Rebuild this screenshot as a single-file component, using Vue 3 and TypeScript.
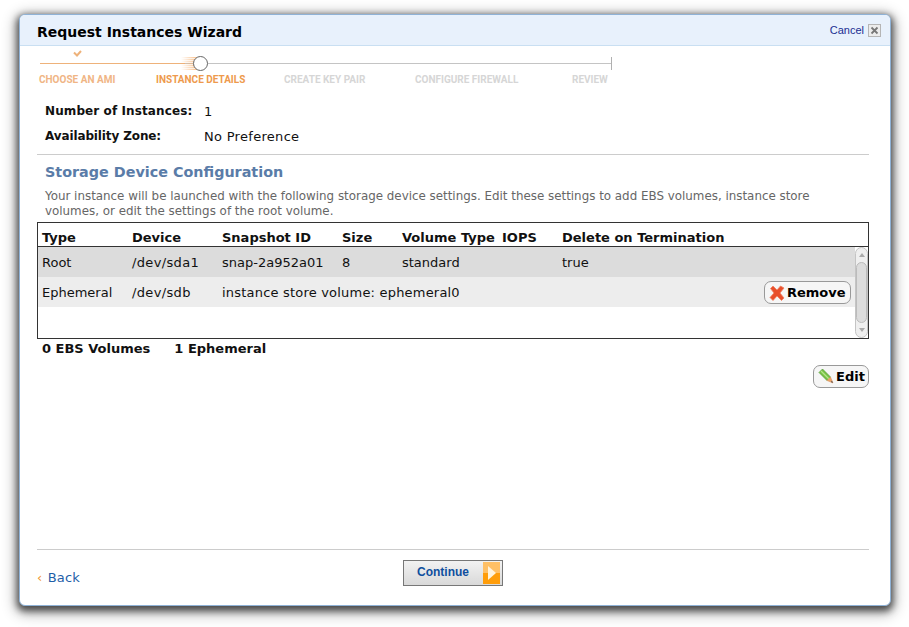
<script setup lang="ts">
interface Step {
  label: string
  state: 'done' | 'active' | 'todo'
  width: number
}

interface Row {
  type: string
  device: string
  snapshot?: string
  size?: string
  volumeType?: string
  iops?: string
  del?: string
  store?: string
  removable?: boolean
}

const steps: Step[] = [
  { label: 'CHOOSE AN AMI', state: 'done', width: 117 },
  { label: 'INSTANCE DETAILS', state: 'active', width: 128 },
  { label: 'CREATE KEY PAIR', state: 'todo', width: 131 },
  { label: 'CONFIGURE FIREWALL', state: 'todo', width: 157 },
  { label: 'REVIEW', state: 'todo', width: 40 },
]

const rows: Row[] = [
  { type: 'Root', device: '/dev/sda1', snapshot: 'snap-2a952a01', size: '8', volumeType: 'standard', iops: '', del: 'true' },
  { type: 'Ephemeral', device: '/dev/sdb', store: 'instance store volume: ephemeral0', removable: true },
]
</script>

<template>
  <div class="page">
    <div class="wizard">
      <header class="head">
        <h1>Request Instances Wizard</h1>
        <div class="cancel">
          <a>Cancel</a>
          <span class="close-box">
            <svg width="9" height="9" viewBox="0 0 9 9"><path d="M1.500 1.500 7.500 7.500M7.500 1.500 1.500 7.500" stroke="#777" stroke-width="1.800" /></svg>
          </span>
        </div>
      </header>

      <div class="content">
        <div class="progress">
          <div class="track">
            <div class="track-done"></div>
            <div class="fade"></div>
            <div class="knob"></div>
            <div class="track-end"></div>
            <svg class="tick" width="9" height="7" viewBox="0 0 9 7"><path d="M1 2.500 4 5.500 8 1" fill="none" stroke="#eeb27a" stroke-width="2" /></svg>
          </div>
          <div class="labels">
            <span v-for="s in steps" :key="s.label" :class="['step', s.state]" :style="{ width: s.width + 'px' }">{{ s.label }}</span>
          </div>
        </div>

        <dl class="facts">
          <div class="fact"><dt class="count">Number of Instances:</dt><dd class="count-value">1</dd></div>
          <div class="fact"><dt class="zone">Availability Zone:</dt><dd>No Preference</dd></div>
        </dl>

        <section class="storage">
          <h2>Storage Device Configuration</h2>
          <p>Your instance will be launched with the following storage device settings. Edit these settings to add EBS volumes, instance store volumes, or edit the settings of the root volume.</p>

          <div class="table">
            <div class="row header">
              <span>Type</span><span>Device</span><span>Snapshot ID</span><span>Size</span><span>Volume Type</span><span>IOPS</span><span>Delete on Termination</span>
            </div>
            <div class="body">
              <div v-for="(r, i) in rows" :key="r.device" :class="['row', i % 2 ? 'even' : 'odd']">
                <span>{{ r.type }}</span>
                <span class="device">{{ r.device }}</span>
                <template v-if="r.store">
                  <span class="wide">{{ r.store }}</span>
                </template>
                <template v-else>
                  <span>{{ r.snapshot }}</span><span>{{ r.size }}</span><span>{{ r.volumeType }}</span><span>{{ r.iops }}</span><span>{{ r.del }}</span>
                </template>
                <button v-if="r.removable" class="pill remove">
                  <svg width="16" height="16" viewBox="0 0 16 16"><path d="M1.500 3.500 4 1l4 4 3.500-4L15 3l-4 5 4 5-2.500 2.500L8 11l-4 4.500L1 12.500 5 8z" fill="#e8502c" stroke="#f08060" stroke-width=".8" /></svg>
                  Remove
                </button>
              </div>
              <div class="scrollbar">
                <span class="arrow up"></span>
                <span class="thumb"></span>
                <span class="arrow down"></span>
              </div>
            </div>
          </div>

          <div class="totals">
            <span>0 EBS Volumes</span>
            <span>1 Ephemeral</span>
          </div>

          <div class="edit-line">
            <button class="pill edit">
              <svg width="17" height="17" viewBox="0 0 17 17">
                <path d="M1 4.500 4.500 1 12.500 9 9 12.500z" fill="#76c043" stroke="#4f9a35" stroke-width=".7" />
                <path d="M3 3 11 11" stroke="#b4e58a" stroke-width="1.300" />
                <path d="M9 12.500 12.500 9 15 15z" fill="#eca36a" stroke="#d98a50" stroke-width=".5" />
                <path d="M12.800 14 14 12.800 15 15z" fill="#555" />
              </svg>
              Edit
            </button>
          </div>
        </section>

        <footer class="foot">
          <a class="back"><span class="chev">‹</span> Back</a>
          <button class="continue">
            <span>Continue</span>
            <span class="go">
              <svg width="10" height="16" viewBox="0 0 10 16"><path d="M1 1 9 8 1 15z" fill="#fff3dc" /></svg>
            </span>
          </button>
        </footer>
      </div>
    </div>
  </div>
</template>

<style>
body {
  background: #fff;
}
</style>

<style scoped>
.page {
  height: 627px;
  box-sizing: border-box;
  padding: 14px 18px 21px 19px;
  font-family: "DejaVu Sans", sans-serif;
  font-size: 13px;
  color: #111;
  overflow: hidden;
}

.wizard {
  height: 592px;
  box-sizing: border-box;
  display: flex;
  flex-direction: column;
  background: #fff;
  border: 1px solid #8fb2d6;
  border-radius: 6px;
  box-shadow: 0 3px 7px 2px rgba(0, 0, 0, 0.6), 0 4px 14px 4px rgba(0, 0, 0, 0.3);
}

.head {
  height: 30px;
  flex: none;
  display: flex;
  align-items: center;
  justify-content: space-between;
  padding: 0 9px 0 17px;
  background: #e8f1fc;
  border-bottom: 1px solid #c9dff2;
  border-radius: 5px 5px 0 0;
}

h1 {
  margin: 3px 0 0;
  font-size: 14px;
  font-weight: 700;
  color: #000;
}

.cancel {
  display: flex;
  align-items: center;
  gap: 4px;
  font-family: "Liberation Sans", sans-serif;
  font-size: 11px;
  color: #1b2f92;
}

.close-box {
  width: 11px;
  height: 11px;
  display: flex;
  align-items: center;
  justify-content: center;
  background: #ececec;
  border: 1px solid #b5b5b5;
}

.content {
  flex: 1;
  display: flex;
  flex-direction: column;
  padding: 0 21px 0 17px;
}

.progress {
  height: 45px;
  flex: none;
}

.track {
  position: relative;
  height: 18px;
  width: 572px;
  margin-left: 3px;
}

.track::before {
  content: "";
  position: absolute;
  left: 0;
  right: 0;
  top: 17px;
  height: 1px;
  background: #c4c4c4;
}

.track-done {
  position: absolute;
  left: 0;
  top: 17px;
  width: 145px;
  height: 1px;
  background: #eeb27a;
}

.fade {
  position: absolute;
  left: 141px;
  top: 11px;
  width: 16px;
  height: 13px;
  background: repeating-linear-gradient(180deg, rgba(246, 170, 100, 0.75) 0 1px, rgba(246, 170, 100, 0.25) 1px 2px);
  -webkit-mask-image: linear-gradient(90deg, transparent, #000);
  mask-image: linear-gradient(90deg, transparent, #000);
}

.knob {
  position: absolute;
  left: 153px;
  top: 10px;
  width: 15px;
  height: 15px;
  box-sizing: border-box;
  background: #fff;
  border: 1.500px solid #666;
  border-radius: 50%;
}

.track-end {
  position: absolute;
  right: 0;
  top: 11px;
  width: 1px;
  height: 13px;
  background: #b0b0b0;
}

.tick {
  position: absolute;
  left: 33px;
  top: 4px;
}

.labels {
  display: flex;
  margin-top: 9px;
  margin-left: 2px;
}

.step {
  font-family: Roboto, sans-serif;
  font-size: 10px;
  font-weight: 700;
  line-height: 14px;
  white-space: nowrap;
  flex: none;
}

.step.done {
  color: #f0b585;
}

.step.active {
  color: #ee9a4d;
}

.step.todo {
  color: #d6d6d6;
}

.facts {
  margin: 8px 0 0;
  flex: none;
}

.fact {
  display: flex;
  height: 25px;
  align-items: center;
  padding-left: 8px;
}

dt {
  width: 159px;
  margin-top: -2px;
  font-weight: 700;
  font-size: 12px;
}

dt.count {
  letter-spacing: 0.1px;
}

dt.zone {
  letter-spacing: -0.12px;
}

dd {
  margin: 0;
  letter-spacing: 0.3px;
}

.storage {
  margin-top: 5px;
  flex: 1;
  border-top: 1px solid #ccc;
}

h2 {
  margin: 9px 0 0 8px;
  font-size: 14.350px;
  line-height: 17px;
  font-weight: 700;
  color: #5a7ca8;
}

.storage p {
  margin: 8px 30px 0 8px;
  font-size: 11.880px;
  line-height: 15px;
  color: #666;
}

.table {
  margin-top: 3px;
  height: 117px;
  box-sizing: border-box;
  border: 1px solid #333;
}

.row {
  display: grid;
  grid-template-columns: 90px 90px 120px 60px 100px 60px 1fr;
  align-items: center;
  padding-left: 4px;
  position: relative;
}

.row > span {
  white-space: nowrap;
}

.row > .device {
  letter-spacing: 0.35px;
}

.row > .wide {
  grid-column: span 5;
  letter-spacing: 0.2px;
}

.header {
  height: 24px;
  box-sizing: border-box;
  padding-top: 6px;
  font-weight: 700;
  border-bottom: 1px solid #333;
}

.body {
  position: relative;
  height: 91px;
  padding-right: 13px;
}

.odd,
.even {
  height: 30px;
}

.odd {
  background: #dcdcdc;
}

.even {
  background: #ededed;
}

.pill {
  display: inline-flex;
  align-items: center;
  gap: 2px;
  box-sizing: border-box;
  height: 23px;
  background: #f6f6f6;
  border: 1px solid #999;
  border-radius: 7px;
  font-family: "DejaVu Sans", sans-serif;
  font-size: 13px;
  font-weight: 700;
  color: #000;
  padding: 0 4px;
}

.remove {
  position: absolute;
  right: 4px;
  top: 4px;
  width: 87px;
}

.scrollbar {
  position: absolute;
  right: 0;
  top: 0;
  bottom: 0;
  width: 13px;
  box-sizing: border-box;
  display: flex;
  flex-direction: column;
  align-items: center;
  background: #efefef;
  border: 1px solid #c4c4c4;
  border-radius: 7px;
}

.thumb {
  flex: 1;
  width: 11px;
  background: #dcdcdc;
  border: 1px solid #bbb;
  border-radius: 6px;
  box-sizing: border-box;
}

.arrow {
  flex: none;
  width: 0;
  height: 0;
  margin: 5px 0;
  border-left: 3.500px solid transparent;
  border-right: 3.500px solid transparent;
}

.up {
  border-bottom: 4px solid #aaa;
}

.down {
  border-top: 4px solid #aaa;
}

.totals {
  display: flex;
  gap: 24px;
  margin: 2px 0 0 5px;
  font-weight: 700;
  line-height: 16px;
}

.edit-line {
  display: flex;
  justify-content: flex-end;
  margin-top: 8px;
}

.edit {
  width: 56px;
  padding-right: 0;
  gap: 1px;
}

.foot {
  position: relative;
  height: 55px;
  flex: none;
  border-top: 1px solid #ccc;
}

.back {
  position: absolute;
  left: 0;
  top: 20px;
  font-size: 13px;
  letter-spacing: 0.2px;
  color: #1f5fa8;
}

.chev {
  color: #f0962e;
  margin-right: 1px;
}

.continue {
  position: absolute;
  left: 366px;
  top: 10px;
  width: 100px;
  height: 26px;
  display: flex;
  align-items: center;
  justify-content: space-between;
  padding: 0 2px 0 13px;
  box-sizing: border-box;
  border: 1px solid #777;
  background: linear-gradient(#f2f2f2, #d9d9d9);
  font-family: "Liberation Sans", sans-serif;
  font-size: 12px;
  font-weight: 700;
  color: #0f4f9e;
}

.continue > span:first-child {
  margin-bottom: 2px;
}

.go {
  width: 17px;
  height: 22px;
  display: flex;
  align-items: center;
  justify-content: center;
  background: linear-gradient(#ffc066 50%, #ff9d0a 50%);
}
</style>
